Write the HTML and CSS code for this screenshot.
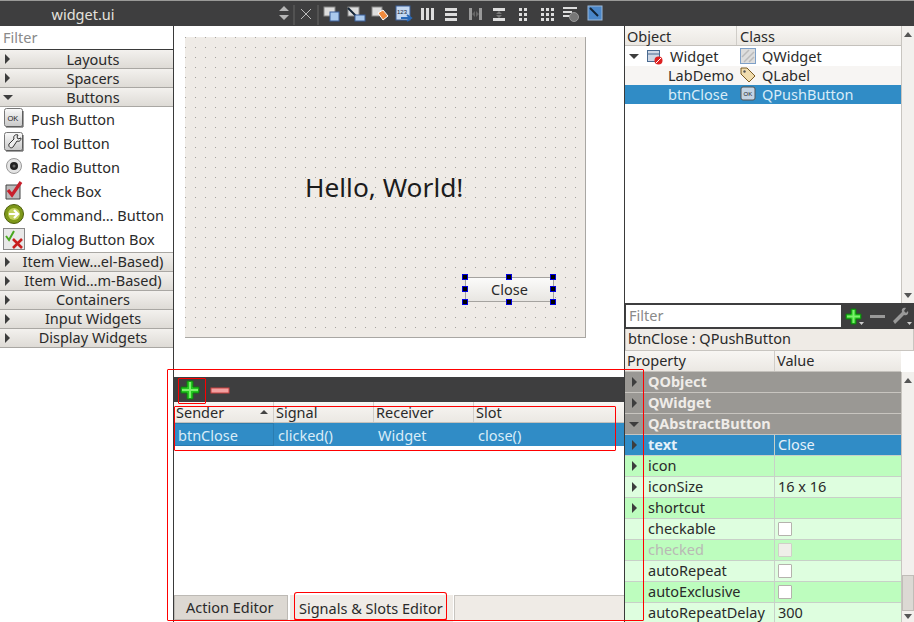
FILE: index.html
```html
<!DOCTYPE html>
<html lang="en">
<head>
    <meta charset="UTF-8">
    <meta name="viewport" content="width=device-width, initial-scale=1.0">
    <title>widget.ui - Qt Designer</title>
    <link rel="stylesheet" href="styles.css">
</head>
<body>
<div class="app">
    <div class="topbar">
        <div class="doc-title">widget.ui</div>
        <svg class="toolbar-icons" width="350" height="26" viewBox="0 0 350 26">
            <path d="M6 11l5-5 5 5zM6 15l5 5 5-5z" fill="#b5b5b5"/>
            <path d="M21 6v20" stroke="#666" transform="translate(0 -1)"/>
            <path d="M28 9l10 10M38 9L28 19" stroke="#bbb" stroke-width="1"/>
            <path d="M45 6v20" stroke="#666" transform="translate(0 -1)"/>
            <rect x="51" y="7" width="11" height="9" fill="#ddd" stroke="#888"/>
            <rect x="57" y="12" width="9" height="9" fill="#a9c8ec" stroke="#3a5f99"/>
            <rect x="75" y="7" width="11" height="9" fill="#ddd" stroke="#888"/>
            <path d="M75 8l8 8" stroke="#123" stroke-width="2"/>
            <rect x="82" y="15" width="10" height="6" fill="#a9c8ec" stroke="#3a5f99"/>
            <rect x="99" y="7" width="10" height="9" fill="#ddd" stroke="#888"/>
            <path d="M105 13l5-3 5 6-5 4z" fill="#f08a3c" stroke="#fff"/>
            <rect x="123" y="6" width="14" height="14" fill="#c5d8f0" stroke="#3a5f99"/>
            <text x="124" y="14" font-size="6" font-family="Liberation Sans" fill="#123">123</text>
            <path d="M128 18h9M134 15l4 3-4 3" fill="none" stroke="#2a6ab8" stroke-width="2"/>
            <path d="M148 8h3v12h-3zM153 8h3v12h-3zM158 8h3v12h-3z" fill="#ddd"/>
            <path d="M172 8h12v3h-12zM172 13h12v3h-12zM172 18h12v3h-12z" fill="#ddd"/>
            <path d="M196 8h3v12h-3zM206 8h3v12h-3z" fill="#999"/>
            <path d="M199 14l3-3v6zM206 14l-3-3v6z" fill="#666"/>
            <path d="M220 8h12v3h-12zM220 18h12v3h-12z" fill="#ddd"/>
            <path d="M226 11l-3 3h6zM226 18l-3-3h6z" fill="#777"/>
            <path d="M246 8h3v3h-3zM251 8h3v3h-3zM246 13h3v3h-3zM251 13h3v3h-3zM246 18h3v3h-3zM251 18h3v3h-3z" fill="#ddd"/>
            <path d="M268 8h3v3h-3zM273 8h3v3h-3zM278 8h3v3h-3zM268 13h3v3h-3zM273 13h3v3h-3zM278 13h3v3h-3zM268 18h3v3h-3zM273 18h3v3h-3zM278 18h3v3h-3z" fill="#ddd"/>
            <path d="M290 7h14v2h-14zM290 11h9v2h-9zM290 15h7v2h-7z" fill="#ddd"/>
            <circle cx="301" cy="17" r="4.500" fill="#777" stroke="#999"/>
            <rect x="315" y="6" width="14" height="14" fill="#4a86c8" stroke="#9bb8d8"/>
            <path d="M317 8l8 8" stroke="#123" stroke-width="2"/>
        </svg>
    </div>

    <div class="workspace">
        <aside class="widget-box">
            <div class="filter">Filter</div>
            <div class="cat top"><span class="arrow right"></span>Layouts</div>
            <div class="cat top"><span class="arrow right"></span>Spacers</div>
            <div class="cat top"><span class="arrow down"></span>Buttons</div>
            <ul class="widget-list">
                <li>
                    <svg width="20" height="20" viewBox="0 0 20 20"><defs><linearGradient id="btnfill" x1="0" y1="0" x2="0" y2="1"><stop offset="0" stop-color="#fafafa"/><stop offset="1" stop-color="#c8c8c8"/></linearGradient></defs><rect x="0.500" y="0.500" width="18" height="18" rx="2" fill="url(#btnfill)" stroke="#777"/><path d="M2 19h17V3" fill="none" stroke="#444"/><text x="3.500" y="12.500" font-size="7.500" font-family="Liberation Sans" fill="#222">OK</text></svg>
                    Push Button
                </li>
                <li>
                    <svg width="20" height="20" viewBox="0 0 20 20"><rect x="0.500" y="0.500" width="18" height="18" rx="2" fill="url(#btnfill)" stroke="#777"/><path d="M2 19h17V3" fill="none" stroke="#444"/><path d="M14 3c-3-1-5 1-4 4l-5 5c-1 3 2 5 4 3l4-6c3 1 4-1 4-3l-3 1-1-2z" fill="#eee" stroke="#333"/></svg>
                    Tool Button
                </li>
                <li>
                    <svg width="20" height="20" viewBox="0 0 20 20"><circle cx="10" cy="10" r="7.500" fill="#e4e4e4" stroke="#999"/><circle cx="10" cy="10" r="4" fill="#222"/><circle cx="10" cy="10" r="1.500" fill="#666"/></svg>
                    Radio Button
                </li>
                <li>
                    <svg width="20" height="20" viewBox="0 0 20 20"><path d="M2 5h14v14H2z" fill="#bbb" stroke="#444"/><path d="M4 10l4 5 9-13" fill="none" stroke="#c8202c" stroke-width="3.200"/></svg>
                    Check Box
                </li>
                <li>
                    <svg width="20" height="20" viewBox="0 0 20 20"><circle cx="10" cy="10" r="9.500" fill="#7e981a" stroke="#4d5e0c"/><circle cx="10" cy="10" r="6" fill="#c3d25e"/><path d="M5 10h8M10 6l4 4-4 4" fill="none" stroke="#fff" stroke-width="2.200"/></svg>
                    Command… Button
                </li>
                <li>
                    <svg width="22" height="22" viewBox="0 0 22 22"><rect x="0.500" y="0.500" width="21" height="21" fill="#e8e8e8" stroke="#888"/><path d="M3 8l3 4 5-9" fill="none" stroke="#49a81f" stroke-width="2"/><path d="M10 11l9 9M19 11l-9 9" stroke="#c81e1e" stroke-width="2.600"/></svg>
                    Dialog Button Box
                </li>
            </ul>
            <div class="cat first-after"><span class="arrow right small"></span>Item View…el-Based)</div>
            <div class="cat"><span class="arrow right small"></span>Item Wid…m-Based)</div>
            <div class="cat"><span class="arrow right small"></span>Containers</div>
            <div class="cat"><span class="arrow right small"></span>Input Widgets</div>
            <div class="cat"><span class="arrow right small"></span>Display Widgets</div>
        </aside>

        <main class="center">
            <div class="canvas">
                <div class="form">
                    <div class="hello">Hello, World!</div>
                    <div class="close-btn">Close</div>
                    <i class="handle h1"></i><i class="handle h2"></i><i class="handle h3"></i>
                    <i class="handle h4"></i><i class="handle h5"></i>
                    <i class="handle h6"></i><i class="handle h7"></i><i class="handle h8"></i>
                </div>
            </div>
            <div class="conn-bar">
                <svg width="24" height="24" viewBox="0 0 24 24"><path d="M9 3h6v6h6v6h-6v6H9v-6H3V9h6z" fill="#22c81e" stroke="#0f7a0e"/><path d="M11 4h2v16h-2zM4 11h16v2H4z" fill="#7cf06c"/></svg>
                <svg width="22" height="24" viewBox="0 0 22 24"><rect x="2" y="10" width="18" height="5" fill="#f2a0a0" stroke="#c84040"/></svg>
            </div>
            <div class="conn-head">
                <div class="ch c1">Sender<span class="sort"></span></div>
                <div class="ch c2">Signal</div>
                <div class="ch c3">Receiver</div>
                <div class="ch c4">Slot</div>
            </div>
            <div class="conn-row">
                <div class="cr c1">btnClose</div>
                <div class="cr c2">clicked()</div>
                <div class="cr c3">Widget</div>
                <div class="cr c4">close()</div>
            </div>
            <div class="conn-empty"></div>
            <div class="tabs">
                <div class="tab">Action Editor</div>
                <div class="tab active">Signals &amp; Slots Editor</div>
                <div class="tab-rest"></div>
            </div>
            <i class="mark m-outer"></i>
            <i class="mark m-plus"></i>
            <i class="mark m-table"></i>
            <i class="mark m-tab"></i>
        </main>

        <aside class="right">
            <div class="inspector">
                <div class="tree">
                    <div class="tree-head"><div class="th-obj">Object</div><div class="th-cls">Class</div></div>
                    <div class="tree-row">
                        <div class="t-obj"><span class="arrow down tw"></span>
                            <svg class="ti" width="16" height="16" viewBox="0 0 16 16"><rect x="0.500" y="1.500" width="12" height="11" fill="#cfd8e6" stroke="#4a6a90"/><path d="M1 5h11" stroke="#4a6a90"/><circle cx="11.500" cy="11.500" r="4" fill="#d22"/><path d="M9 14l5-5" stroke="#fff"/></svg>
                            Widget</div>
                        <div class="t-cls"><svg width="16" height="16" viewBox="0 0 16 16"><rect x="0.500" y="0.500" width="15" height="15" fill="#ddd" stroke="#7ea0c8"/><path d="M2 9l7-7M4 14L14 4M9 14l5-5" stroke="#bbb" stroke-width="1.500"/></svg>QWidget</div>
                    </div>
                    <div class="tree-row alt">
                        <div class="t-obj indent">LabDemo</div>
                        <div class="t-cls"><svg width="16" height="16" viewBox="0 0 16 16"><path d="M1 1h6l8 8-6 6-8-8z" fill="#f0dcae" stroke="#7a5a20"/><circle cx="4.500" cy="4.500" r="1.200" fill="#555"/></svg>QLabel</div>
                    </div>
                    <div class="tree-row sel">
                        <div class="t-obj indent">btnClose</div>
                        <div class="t-cls"><svg width="16" height="16" viewBox="0 0 16 16"><rect x="1" y="1" width="14" height="13" rx="2" fill="#c4d4e4" stroke="#555"/><text x="3.500" y="10" font-size="6" font-family="Liberation Sans" fill="#222">OK</text></svg>QPushButton</div>
                    </div>
                    <div class="scroll"><span class="up"></span><span class="dn"></span></div>
                </div>
                <div class="prop-filter">
                    <div class="prop-input">Filter</div>
                    <svg width="24" height="22" viewBox="0 0 24 22"><path d="M9 4h5v5h5v5h-5v5H9v-5H4V9h5z" fill="#22c81e" stroke="#0f7a0e"/><path d="M10.500 5h2v13h-2zM5 10.500h13v2H5z" fill="#7cf06c"/><path d="M17 17h5l-2.500 3z" fill="#ccc"/></svg>
                    <svg width="24" height="22" viewBox="0 0 24 22"><rect x="4" y="10" width="15" height="3" fill="#999"/></svg>
                    <svg width="24" height="22" viewBox="0 0 24 22"><path d="M16 3c-3-1-5 1-4 4L3 16l2 3 9-9c3 1 5-1 4-4l-2 2-2-2z" fill="#999"/><path d="M17 17h5l-2.500 3z" fill="#ccc"/></svg>
                </div>
                <div class="obj-title">btnClose : QPushButton</div>
                <div class="prop-head"><div class="pn">Property</div><div class="pv">Value</div></div>
                <div class="props">
                    <div class="group"><span class="arrow right"></span>QObject</div>
                    <div class="group"><span class="arrow right"></span>QWidget</div>
                    <div class="group"><span class="arrow down"></span>QAbstractButton</div>
                    <div class="prop sel"><span class="gut"><span class="arrow right"></span></span><div class="pn bold">text</div><div class="pv">Close</div></div>
                    <div class="prop"><span class="gut"><span class="arrow right"></span></span><div class="pn">icon</div><div class="pv"></div></div>
                    <div class="prop lite"><span class="gut"><span class="arrow right"></span></span><div class="pn">iconSize</div><div class="pv">16 x 16</div></div>
                    <div class="prop"><span class="gut"><span class="arrow right"></span></span><div class="pn">shortcut</div><div class="pv"></div></div>
                    <div class="prop lite"><span class="gut"></span><div class="pn">checkable</div><div class="pv"><span class="box"></span></div></div>
                    <div class="prop"><span class="gut"></span><div class="pn off">checked</div><div class="pv"><span class="box off"></span></div></div>
                    <div class="prop lite"><span class="gut"></span><div class="pn">autoRepeat</div><div class="pv"><span class="box"></span></div></div>
                    <div class="prop"><span class="gut"></span><div class="pn">autoExclusive</div><div class="pv"><span class="box"></span></div></div>
                    <div class="prop lite"><span class="gut"></span><div class="pn">autoRepeatDelay</div><div class="pv">300</div></div>
                    <div class="scroll s2"><span class="up"></span><span class="thumb"></span><span class="dn"></span></div>
                </div>
            </div>
        </aside>
    </div>
</div>
</body>
</html>
```

FILE: styles.css
```css
* {
    box-sizing: border-box;
}
html, body {
    margin: 0;
    height: 100%;
    overflow: hidden;
}
body {
    font-family: "Noto Sans", "Open Sans", sans-serif;
    font-size: 14.5px;
    color: #2a2a2a;
    background: #ffffff;
}
.app {
    width: 914px;
    height: 622px;
    display: flex;
    flex-direction: column;
}
.topbar {
    height: 26px;
    flex: none;
    display: flex;
    background: #3e3e3f;
    border-top: 1px solid #9a9a98;
}
.doc-title {
    width: 166px;
    text-align: center;
    color: #e4e2de;
    line-height: 27px;
}
.toolbar-icons {
    margin-left: 107px;
    margin-top: -1px;
}
.workspace {
    flex: 1;
    display: flex;
    min-height: 0;
}

/* widget box */
.widget-box {
    width: 174px;
    flex: none;
    border-right: 1px solid #3a3a3a;
}
.filter {
    height: 24px;
    padding-left: 3px;
    line-height: 23px;
    color: #8a8a8a;
    border-bottom: 1px solid #3a3a3a;
}
.cat {
    position: relative;
    height: 19px;
    line-height: 16px;
    text-align: center;
    background: linear-gradient(#f3f1ee, #dedbd6);
    border-bottom: 1px solid #a9a7a3;
    padding-left: 13px;
    white-space: nowrap;
}
.cat.top {
    line-height: 18px;
}
.first-after {
    border-top: 1px solid #a9a7a3;
    height: 20px;
}
.arrow {
    display: inline-block;
    width: 0;
    height: 0;
    border-style: solid;
    border-color: transparent;
}
.arrow.right {
    border-width: 5px 0 5px 5px;
    border-left-color: #3d3d3d;
}
.arrow.down {
    border-width: 5px 5px 0 5px;
    border-top-color: #3d3d3d;
}
.cat .arrow {
    position: absolute;
    left: 5px;
    top: 4px;
}
.cat .arrow.down {
    left: 3px;
    top: 7px;
}
.widget-list {
    list-style: none;
    margin: 0;
    padding: 0;
    height: 145px;
}
.widget-list li {
    height: 24px;
    display: flex;
    align-items: center;
    white-space: nowrap;
    position: relative;
    padding-left: 31px;
}
.widget-list svg {
    position: absolute;
    left: 4px;
    top: 1px;
}
.widget-list li:last-child svg {
    left: 3px;
    top: 1px;
}

/* center */
.center {
    position: relative;
    width: 450px;
    flex: none;
    display: flex;
    flex-direction: column;
}
.canvas {
    height: 351px;
    flex: none;
    padding: 11px 0 0 11px;
}
.form {
    position: relative;
    width: 401px;
    height: 301px;
    background-color: #efebe6;
    background-image: radial-gradient(circle at 0.5px 0.5px, #a3a19c 0.5px, transparent 0.7px);
    background-size: 10px 10px;
    border-right: 1px solid #a9a7a3;
    border-bottom: 1px solid #a9a7a3;
}
.hello {
    position: absolute;
    left: 120px;
    top: 132px;
    font-size: 26.3px;
    line-height: 36px;
    color: #1c1c1c;
}
.close-btn {
    position: absolute;
    left: 280px;
    top: 240px;
    width: 89px;
    height: 25px;
    text-align: center;
    line-height: 23px;
    background: linear-gradient(#fbfbfa, #e8e6e2);
    border: 1px solid #a5a39f;
}
.handle {
    position: absolute;
    width: 6px;
    height: 6px;
    background: #000;
    border: 1px solid #0000e0;
}
.h1 { left: 277px; top: 237px; }
.h2 { left: 321px; top: 237px; }
.h3 { left: 365px; top: 237px; }
.h4 { left: 277px; top: 249px; }
.h5 { left: 365px; top: 249px; }
.h6 { left: 277px; top: 262px; }
.h7 { left: 321px; top: 262px; }
.h8 { left: 365px; top: 262px; }
.conn-bar {
    height: 25px;
    flex: none;
    display: flex;
    align-items: center;
    padding-left: 4px;
    gap: 7px;
    background: #3e3e3f;
}
.conn-head {
    height: 21px;
    flex: none;
    display: flex;
    background: linear-gradient(#f8f6f3, #ebe8e3);
    border-bottom: 1px solid #c4c1bc;
}
.ch {
    position: relative;
    padding-left: 2px;
    line-height: 21px;
    border-right: 1px solid #d0cdc8;
}
.c1 { width: 100px; }
.c2 { width: 100px; }
.c3 { width: 100px; }
.c4 { flex: 1; }
.ch.c4 { border-right: none; }
.sort {
    position: absolute;
    right: 5px;
    top: 8px;
    border-style: solid;
    border-width: 0 4px 4px 4px;
    border-color: transparent transparent #444 transparent;
}
.conn-row {
    height: 23px;
    flex: none;
    display: flex;
    background: #308cc6;
    color: #d9ecf8;
}
.cr {
    padding-left: 4px;
    line-height: 25px;
}
.cr.c1 {
    border: 1px solid #2a7cb0;
    line-height: 23px;
    padding-left: 3px;
}
.conn-empty {
    flex: 1;
}
.tabs {
    height: 27px;
    flex: none;
    display: flex;
    align-items: flex-start;
    background: #ffffff;
}
.tab {
    height: 25px;
    padding: 0 11px;
    line-height: 22px;
    white-space: nowrap;
    background: #dcd8d2;
    border: 1px solid #bdbab5;
    width: 114px;
}
.tab.active {
    width: 163px;
    height: 27px;
    margin-left: 2px;
    padding: 0 9px;
    line-height: 27px;
    background: #efebe6;
    border: none;
}
.tab-rest {
    flex: 1;
    height: 25px;
    margin-left: 1px;
    background: #efebe6;
    border-top: 1px solid #c8c5c0;
    border-left: 1px solid #c8c5c0;
}
.mark {
    position: absolute;
    z-index: 5;
    border: 1px solid #ff0000;
    border-radius: 1px;
    pointer-events: none;
}
.m-outer { left: -7px; top: 343px; width: 477px; height: 252px; }
.m-plus { left: 4px; top: 352px; width: 28px; height: 26px; }
.m-table { left: 0; top: 380px; width: 442px; height: 45px; }
.m-tab { left: 120px; top: 566px; width: 153px; height: 29px; border-width: 1px 1px 2px; border-radius: 3px; }

/* right side */
.right {
    width: 290px;
    flex: none;
    border-left: 1px solid #3a3a3a;
}
.inspector {
    height: 100%;
    display: flex;
    flex-direction: column;
}
.tree {
    position: relative;
    height: 277px;
    flex: none;
    padding-right: 13px;
}
.tree-head {
    height: 20px;
    display: flex;
    background: linear-gradient(#f8f6f3, #ebe8e3);
    border-bottom: 1px solid #c4c1bc;
}
.th-obj {
    width: 112px;
    padding-left: 2px;
    line-height: 20px;
    border-right: 1px solid #d0cdc8;
}
.th-cls {
    padding-left: 3px;
    line-height: 20px;
}
.tree-row {
    height: 19px;
    display: flex;
    white-space: nowrap;
}
.tree-head + .tree-row {
    margin-top: 1px;
}
.tree-row.alt {
    background: #f7f5f3;
}
.tree-row.sel {
    background: #308cc6;
    color: #d9ecf8;
}
.t-obj {
    width: 113px;
    line-height: 19px;
    display: flex;
    align-items: center;
}
.t-obj.indent {
    padding-left: 43px;
}
.tw {
    margin-left: 4px;
}
.ti {
    margin: 0 7px 0 8px;
}
.t-cls {
    display: flex;
    align-items: center;
    gap: 6px;
    padding: 0 0 2px 2px;
}
.scroll {
    position: absolute;
    right: 0;
    top: 0;
    bottom: 0;
    width: 13px;
    display: flex;
    flex-direction: column;
    justify-content: space-between;
    align-items: center;
    background: #f2f0ed;
    border-left: 1px solid #c8c5c0;
    padding: 6px 0 5px;
}
.scroll .up {
    border-style: solid;
    border-width: 0 4px 5px 4px;
    border-color: transparent transparent #555 transparent;
}
.scroll .dn {
    border-style: solid;
    border-width: 5px 4px 0 4px;
    border-color: #555 transparent transparent transparent;
}
.prop-filter {
    height: 26px;
    flex: none;
    display: flex;
    align-items: center;
    padding: 0 0 0 1px;
    background: #3e3e3f;
}
.prop-input {
    width: 215px;
    height: 22px;
    margin-right: 1px;
    padding-left: 3px;
    line-height: 21px;
    color: #8a8a8a;
    background: #ffffff;
}
.obj-title {
    height: 22px;
    flex: none;
    padding-left: 2px;
    line-height: 18px;
    background: #efebe6;
    border: 1px solid #c8c5c0;
    border-top: 0;
    white-space: nowrap;
}
.prop-head {
    height: 21px;
    flex: none;
    display: flex;
    margin-right: 13px;
    background: linear-gradient(#f8f6f3, #ebe8e3);
    border-bottom: 1px solid #c4c1bc;
}
.prop-head .pn {
    width: 150px;
    padding-left: 2px;
    line-height: 18px;
    border-right: 1px solid #d0cdc8;
}
.prop-head .pv {
    padding-left: 2px;
    line-height: 18px;
}
.props {
    flex: 1;
    padding-right: 13px;
    position: relative;
    overflow: hidden;
}
.group {
    height: 21px;
    position: relative;
    padding-left: 23px;
    line-height: 18px;
    font-weight: 700;
    color: #efece8;
    background: #9a9894;
    border-bottom: 1px solid #c8c5c0;
}
.group .arrow {
    position: absolute;
    left: 7px;
    top: 5px;
}
.group .arrow.down {
    left: 4px;
    top: 8px;
}
.prop {
    height: 21px;
    display: flex;
    background: #bdfdbe;
    border-bottom: 1px solid #c8d0c8;
    white-space: nowrap;
}
.prop.lite {
    background: #defedf;
}
.prop.sel {
    background: #308cc6;
    color: #e4f1fa;
}
.gut {
    width: 23px;
    flex: none;
    padding: 5px 0 0 7px;
    line-height: 0;
}
.prop .pn {
    width: 127px;
    flex: none;
    line-height: 18px;
    border-right: 1px solid #c8d0c8;
}
.prop .pv {
    padding-left: 3px;
    line-height: 18px;
}
.pn.bold {
    font-weight: 700;
}
.pn.off {
    color: #b9b9b5;
}
.box {
    display: block;
    width: 14px;
    height: 14px;
    margin: 3px 0 0 0;
    background: #ffffff;
    border: 1px solid #b5b2ad;
    border-radius: 1px;
}
.box.off {
    background: #efefe9;
    border-color: #d0d0c8;
}
.s2 {
    padding: 6px 0 3px;
    top: 0;
}
.s2 .thumb {
    width: 12px;
    height: 36px;
    margin-top: auto;
    margin-bottom: 3px;
    background: #dcd9d4;
    border: 1px solid #c0bdb8;
}
```
